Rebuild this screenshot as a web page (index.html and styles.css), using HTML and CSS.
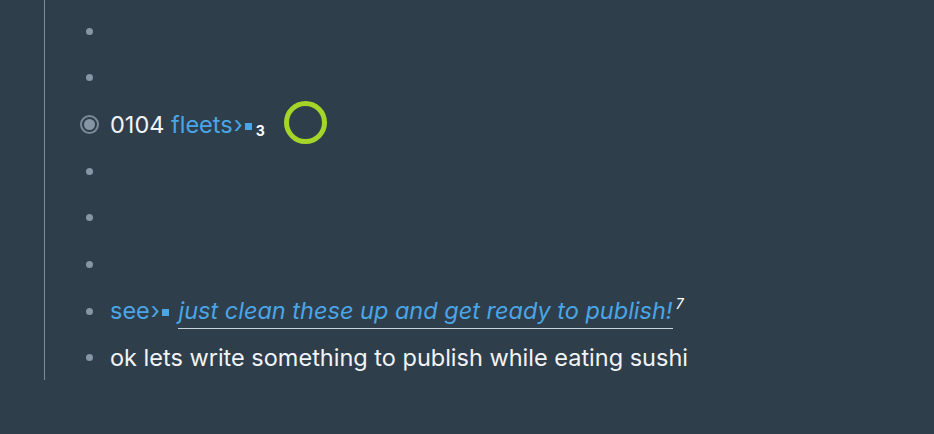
FILE: index.html
```html
<!DOCTYPE html>
<html>
<head>
<meta charset="utf-8">
<link rel="stylesheet" href="styles.css">
</head>
<body>
<div class="outline">
  <div class="row"><span class="bw"><span class="dot"></span></span></div>
  <div class="row"><span class="bw"><span class="dot"></span></span></div>
  <div class="row"><span class="bw"><span class="ring"><span class="inner"></span></span></span>
    <span class="text">0104 <span class="link">fleets</span><span class="arrow">›</span><span class="sq"></span><span class="count">3</span><span class="green"></span></span>
  </div>
  <div class="row"><span class="bw"><span class="dot"></span></span></div>
  <div class="row"><span class="bw"><span class="dot"></span></span></div>
  <div class="row"><span class="bw"><span class="dot"></span></span></div>
  <div class="row"><span class="bw"><span class="dot"></span></span>
    <span class="text"><span class="link">see</span><span class="arrow">›</span><span class="sq"></span> <span class="ref">just clean these up and get ready to publish!</span><span class="num">7</span></span>
  </div>
  <div class="row"><span class="bw"><span class="dot"></span></span>
    <span class="text">ok lets write something to publish while eating sushi</span>
  </div>
</div>
</body>
</html>
```
FILE: styles.css
```css
html, body {
  margin: 0;
  padding: 0;
  background: #2f3e4b;
  width: 934px;
  height: 434px;
  overflow: hidden;
}
body {
  font-family: Inter, "Noto Sans", sans-serif;
  font-size: 23.5px;
  color: #f1f4f7;
}
.outline {
  margin-left: 44px;
  width: 760px;
  border-left: 1px solid #7d8d9b;
  padding-top: 8px;
  box-sizing: border-box;
  height: 380px;
}
.row {
  display: flex;
  align-items: center;
  height: 46.67px;
}
.bw {
  width: 20px;
  margin-left: 34px;
  display: flex;
  justify-content: center;
  align-items: center;
  flex: none;
}
.dot {
  width: 7px;
  height: 7px;
  border-radius: 50%;
  background: #8796a4;
}
.ring {
  width: 19px;
  height: 19px;
  box-sizing: border-box;
  border: 2px solid #7b8a98;
  border-radius: 50%;
  display: flex;
  align-items: center;
  justify-content: center;
}
.inner {
  width: 11px;
  height: 11px;
  border-radius: 50%;
  background: #8796a4;
}
.text {
  margin-left: 11px;
  line-height: 28px;
  white-space: pre;
}
.link { color: #4aa6e6; }
.arrow { color: #4aa6e6; margin-left: 1px; }
.sq {
  display: inline-block;
  width: 7px;
  height: 7px;
  background: #4aa6e6;
  margin-left: 2px;
  vertical-align: 3px;
}
.count {
  font-size: 14px;
  line-height: 0;
  font-weight: 700;
  color: #ffffff;
  margin-left: 4px;
  vertical-align: -3px;
}
.green {
  display: inline-block;
  width: 43px;
  height: 43px;
  box-sizing: border-box;
  border: 5px solid #a6d52a;
  border-radius: 50%;
  margin: -9px 0 -9px 19px;
  vertical-align: -2.5px;
}
.ref {
  color: #4aa6e6;
  font-style: italic;
  border-bottom: 1px solid #c9d3dc;
  padding-bottom: 3px;
  margin-left: 3px;
}
.num {
  font-size: 14px;
  line-height: 0;
  font-style: italic;
  color: #ffffff;
  vertical-align: 10px;
  margin-left: 3px;
}
```
